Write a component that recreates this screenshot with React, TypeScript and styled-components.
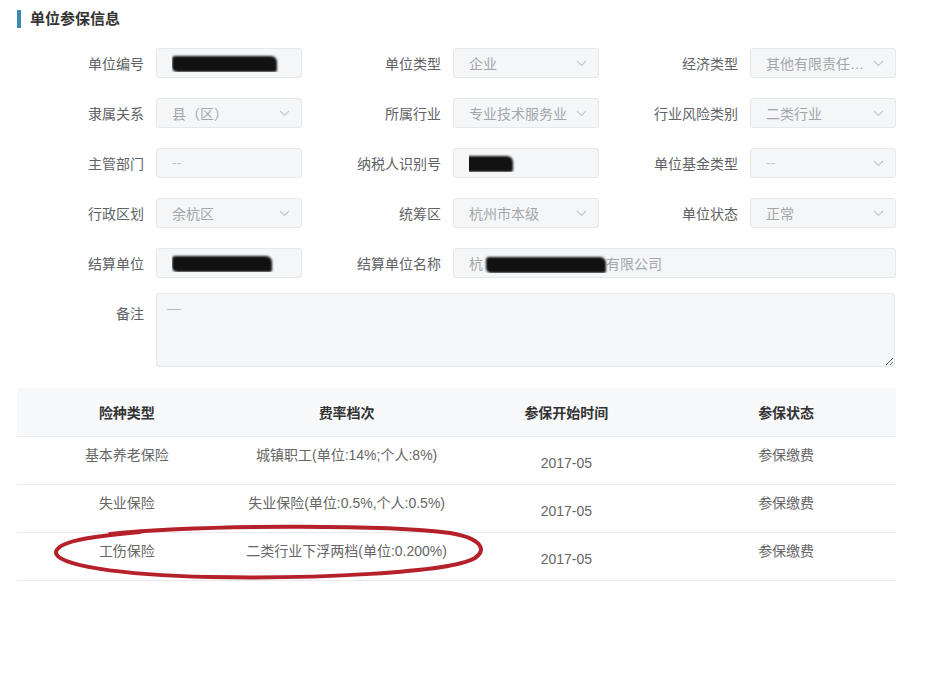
import styled, { createGlobalStyle } from 'styled-components';

const GlobalStyle = createGlobalStyle`
  html, body {
    margin: 0;
    background: #fff;
    font-family: "Liberation Sans", "Noto Sans CJK SC", sans-serif;
    font-size: 14px;
    color: #666;
  }
`;

type FieldProps = {
    label: string;
    value?: string;
    placeholder?: boolean;
    select?: boolean;
    span?: number;
    redact?: { left: number; width: number; after?: string; before?: string };
};

type Row = {
    kind: string;
    rate: string;
    start: string;
    status: string;
};

const fields: FieldProps[] = [
    { label: '单位编号', redact: { left: 0, width: 105 } },
    { label: '单位类型', value: '企业', select: true },
    { label: '经济类型', value: '其他有限责任（有限公司）', select: true },
    { label: '隶属关系', value: '县（区）', select: true },
    { label: '所属行业', value: '专业技术服务业', select: true },
    { label: '行业风险类别', value: '二类行业', select: true },
    { label: '主管部门', value: '--', placeholder: true },
    { label: '纳税人识别号', redact: { left: -15, width: 59 } },
    { label: '单位基金类型', value: '--', placeholder: true, select: true },
    { label: '行政区划', value: '余杭区', select: true },
    { label: '统筹区', value: '杭州市本级', select: true },
    { label: '单位状态', value: '正常', select: true },
    { label: '结算单位', redact: { left: 0, width: 100 } },
    { label: '结算单位名称', span: 2, redact: { left: 3, width: 120, before: '杭', after: '有限公司' } },
];

const rows: Row[] = [
    { kind: '基本养老保险', rate: '城镇职工(单位:14%;个人:8%)', start: '2017-05', status: '参保缴费' },
    { kind: '失业保险', rate: '失业保险(单位:0.5%,个人:0.5%)', start: '2017-05', status: '参保缴费' },
    { kind: '工伤保险', rate: '二类行业下浮两档(单位:0.200%)', start: '2017-05', status: '参保缴费' },
];

export default function App() {
    return (
        <Page>
            <GlobalStyle />
            <Title>单位参保信息</Title>
            <Form>
                {fields.map((f, i) => (
                    <Field key={i} span={f.span}>
                        <Label>{f.label}</Label>
                        <Input>
                            <InputText placeholder={f.placeholder}>
                                {f.redact ? (
                                    <>
                                        {f.redact.before}
                                        <Redact style={{ marginLeft: f.redact.left, width: f.redact.width }} />
                                        {f.redact.after}
                                    </>
                                ) : (
                                    f.value
                                )}
                            </InputText>
                            {f.select && <Chevron />}
                        </Input>
                    </Field>
                ))}
            </Form>
            <RemarkRow>
                <Label>备注</Label>
                <Remark readOnly defaultValue="—" />
            </RemarkRow>
            <TableWrap>
                <Table>
                    <thead>
                        <tr>
                            <Th>险种类型</Th>
                            <Th>费率档次</Th>
                            <Th>参保开始时间</Th>
                            <Th>参保状态</Th>
                        </tr>
                    </thead>
                    <tbody>
                        {rows.map((r, i) => (
                            <tr key={i}>
                                <Td>{r.kind}</Td>
                                <Td>{r.rate}</Td>
                                <Td low>{r.start}</Td>
                                <Td>{r.status}</Td>
                            </tr>
                        ))}
                    </tbody>
                </Table>
                <Circle />
            </TableWrap>
        </Page>
    );
}

function Chevron() {
    return (
        <ChevronIcon width="11" height="7" viewBox="0 0 11 7">
            <polyline points="1,1 5.5,5.5 10,1" fill="none" stroke="#c5c8ce" strokeWidth="1.2" />
        </ChevronIcon>
    );
}

function Circle() {
    // hand-drawn red marker ring around the work injury row
    return (
        <CircleSvg width="445" height="62" viewBox="0 0 445 62">
            <path
                d="M60 13 C150 4, 330 3, 400 12 C430 17, 438 28, 425 37 C400 52, 260 58, 160 56 C70 54, 4 44, 6 31 C8 21, 35 16, 90 11"
                fill="none"
                stroke="#b5212a"
                strokeWidth="4"
                strokeLinecap="round"
            />
        </CircleSvg>
    );
}

const Page = styled.div`
    width: 932px;
    padding-top: 10px;
    padding-bottom: 40px;
`;

const Title = styled.div`
    margin-left: 17px;
    height: 18px;
    line-height: 18px;
    border-left: 4px solid #3a8ab4;
    padding-left: 9px;
    font-size: 15px;
    font-weight: bold;
    color: #333;
`;

const Form = styled.div`
    margin: 20px 0 0 5px;
    display: grid;
    grid-template-columns: repeat(3, 297px);
    row-gap: 20px;
`;

const Field = styled.div<{ span?: number }>`
    display: grid;
    grid-template-columns: 139px 1fr;
    column-gap: 12px;
    align-items: center;
    grid-column: span ${({ span }) => span || 1};
`;

const Label = styled.div`
    text-align: right;
    font-size: 14px;
    color: #606266;
    white-space: nowrap;
`;

const Input = styled.div`
    box-sizing: border-box;
    height: 30px;
    border: 1px solid #e6e8eb;
    border-radius: 3px;
    background: #f5f6f8;
    display: flex;
    align-items: center;
    padding: 0 11px 0 15px;
    overflow: hidden;
`;

const InputText = styled.span<{ placeholder?: boolean }>`
    flex: 1;
    min-width: 0;
    white-space: nowrap;
    overflow: hidden;
    text-overflow: ellipsis;
    color: ${({ placeholder }) => (placeholder ? '#c0c4cc' : '#a3a6ab')};
`;

const Redact = styled.span`
    display: inline-block;
    vertical-align: middle;
    height: 16px;
    background: #111;
    border-radius: 3px 6px 2px 5px;
    filter: blur(0.8px);
`;

const ChevronIcon = styled.svg`
    flex-shrink: 0;
    margin-left: 6px;
`;

const RemarkRow = styled.div`
    margin: 15px 0 0 5px;
    display: grid;
    grid-template-columns: 139px 739px;
    column-gap: 12px;
    align-items: start;
    ${Label} {
        padding-top: 10px;
    }
`;

const Remark = styled.textarea`
    box-sizing: border-box;
    height: 74px;
    border: 1px solid #e6e8eb;
    border-radius: 3px;
    background: #f5f6f8;
    padding: 6px 10px;
    font-family: inherit;
    font-size: 14px;
    color: #bbb;
    outline: none;
`;

const TableWrap = styled.div`
    position: relative;
    margin: 21px 0 0 17px;
    width: 879px;
`;

const Table = styled.table`
    width: 100%;
    border-collapse: collapse;
    table-layout: fixed;
`;

const Th = styled.th`
    height: 48px;
    padding: 0;
    background: #f8f9fb;
    border-bottom: 1px solid #e8eaed;
    font-size: 14px;
    font-weight: bold;
    color: #333;
    text-align: center;
`;

const Td = styled.td<{ low?: boolean }>`
    height: 48px;
    box-sizing: border-box;
    padding: ${({ low }) => (low ? '16px' : '8px')} 0 0;
    vertical-align: top;
    line-height: 20px;
    border-bottom: 1px solid #e8eaed;
    text-align: center;
    color: #666;
    font-size: 14px;
`;

const CircleSvg = styled.svg`
    position: absolute;
    left: 33px;
    top: 133px;
    pointer-events: none;
`;
